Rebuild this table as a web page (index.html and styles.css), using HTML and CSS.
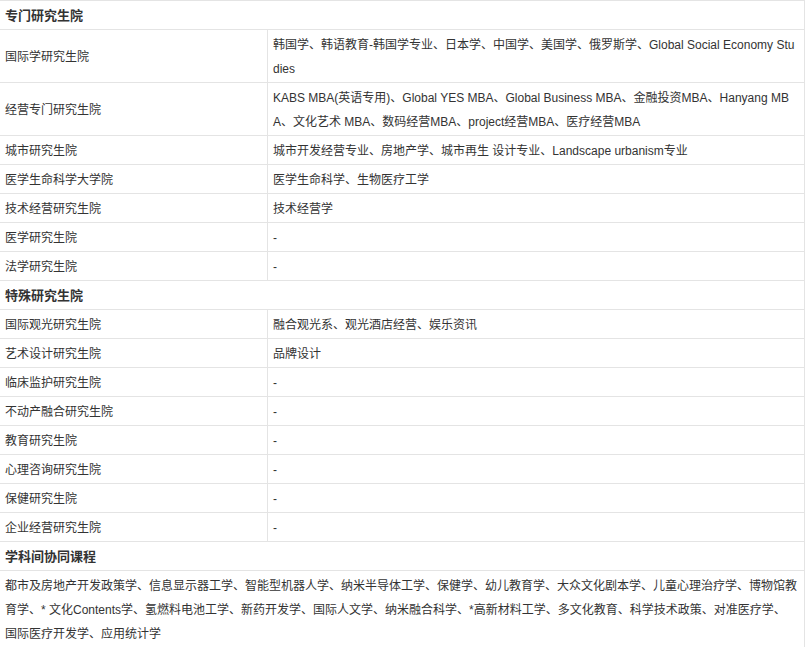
FILE: index.html
```html
<!DOCTYPE html>
<html lang="zh-CN">
<head>
<meta charset="utf-8">
<title>研究生院</title>
<link rel="stylesheet" href="styles.css">
</head>
<body>
<table class="grid">
  <colgroup>
    <col class="col-name">
    <col class="col-desc">
  </colgroup>
  <tbody>
    <tr><th class="section" colspan="2">专门研究生院</th></tr>
    <tr><td class="name">国际学研究生院</td><td class="desc">韩国学、韩语教育-韩国学专业、日本学、中国学、美国学、俄罗斯学、Global Social Economy Studies</td></tr>
    <tr><td class="name">经营专门研究生院</td><td class="desc">KABS MBA(英语专用)、Global YES MBA、Global Business MBA、金融投资MBA、Hanyang MBA、文化艺术 MBA、数码经营MBA、project经营MBA、医疗经营MBA</td></tr>
    <tr><td class="name">城市研究生院</td><td class="desc">城市开发经营专业、房地产学、城市再生 设计专业、Landscape urbanism专业</td></tr>
    <tr><td class="name">医学生命科学大学院</td><td class="desc">医学生命科学、生物医疗工学</td></tr>
    <tr><td class="name">技术经营研究生院</td><td class="desc">技术经营学</td></tr>
    <tr><td class="name">医学研究生院</td><td class="desc">-</td></tr>
    <tr><td class="name">法学研究生院</td><td class="desc">-</td></tr>
    <tr><th class="section" colspan="2">特殊研究生院</th></tr>
    <tr><td class="name">国际观光研究生院</td><td class="desc">融合观光系、观光酒店经营、娱乐资讯</td></tr>
    <tr><td class="name">艺术设计研究生院</td><td class="desc">品牌设计</td></tr>
    <tr><td class="name">临床监护研究生院</td><td class="desc">-</td></tr>
    <tr><td class="name">不动产融合研究生院</td><td class="desc">-</td></tr>
    <tr><td class="name">教育研究生院</td><td class="desc">-</td></tr>
    <tr><td class="name">心理咨询研究生院</td><td class="desc">-</td></tr>
    <tr><td class="name">保健研究生院</td><td class="desc">-</td></tr>
    <tr><td class="name">企业经营研究生院</td><td class="desc">-</td></tr>
    <tr><th class="section" colspan="2">学科间协同课程</th></tr>
    <tr><td class="desc full" colspan="2">都市及房地产开发政策学、信息显示器工学、智能型机器人学、纳米半导体工学、保健学、幼儿教育学、大众文化剧本学、儿童心理治疗学、博物馆教育学、* 文化Contents学、氢燃料电池工学、新药开发学、国际人文学、纳米融合科学、*高新材料工学、多文化教育、科学技术政策、对准医疗学、<br>国际医疗开发学、应用统计学</td></tr>
  </tbody>
</table>
</body>
</html>
```

FILE: styles.css
```css
html, body {
  margin: 0;
  padding: 0;
  background: #ffffff;
}

body {
  font-family: "Liberation Sans", Arial, "Noto Sans CJK SC", sans-serif;
  font-size: 12px;
  color: #333333;
}

.grid {
  border-collapse: collapse;
  table-layout: fixed;
  width: 806px;
  margin-left: -1px;
}

.col-name {
  width: 268px;
}

.grid th,
.grid td {
  border: 1px solid #e4e4e4;
  padding: 3px 5px 1px;
  line-height: 24px;
  text-align: left;
  vertical-align: middle;
}

.grid th.section {
  font-size: 13px;
  font-weight: bold;
  color: #333333;
}

.grid td.desc {
  word-break: break-all;
}
```
